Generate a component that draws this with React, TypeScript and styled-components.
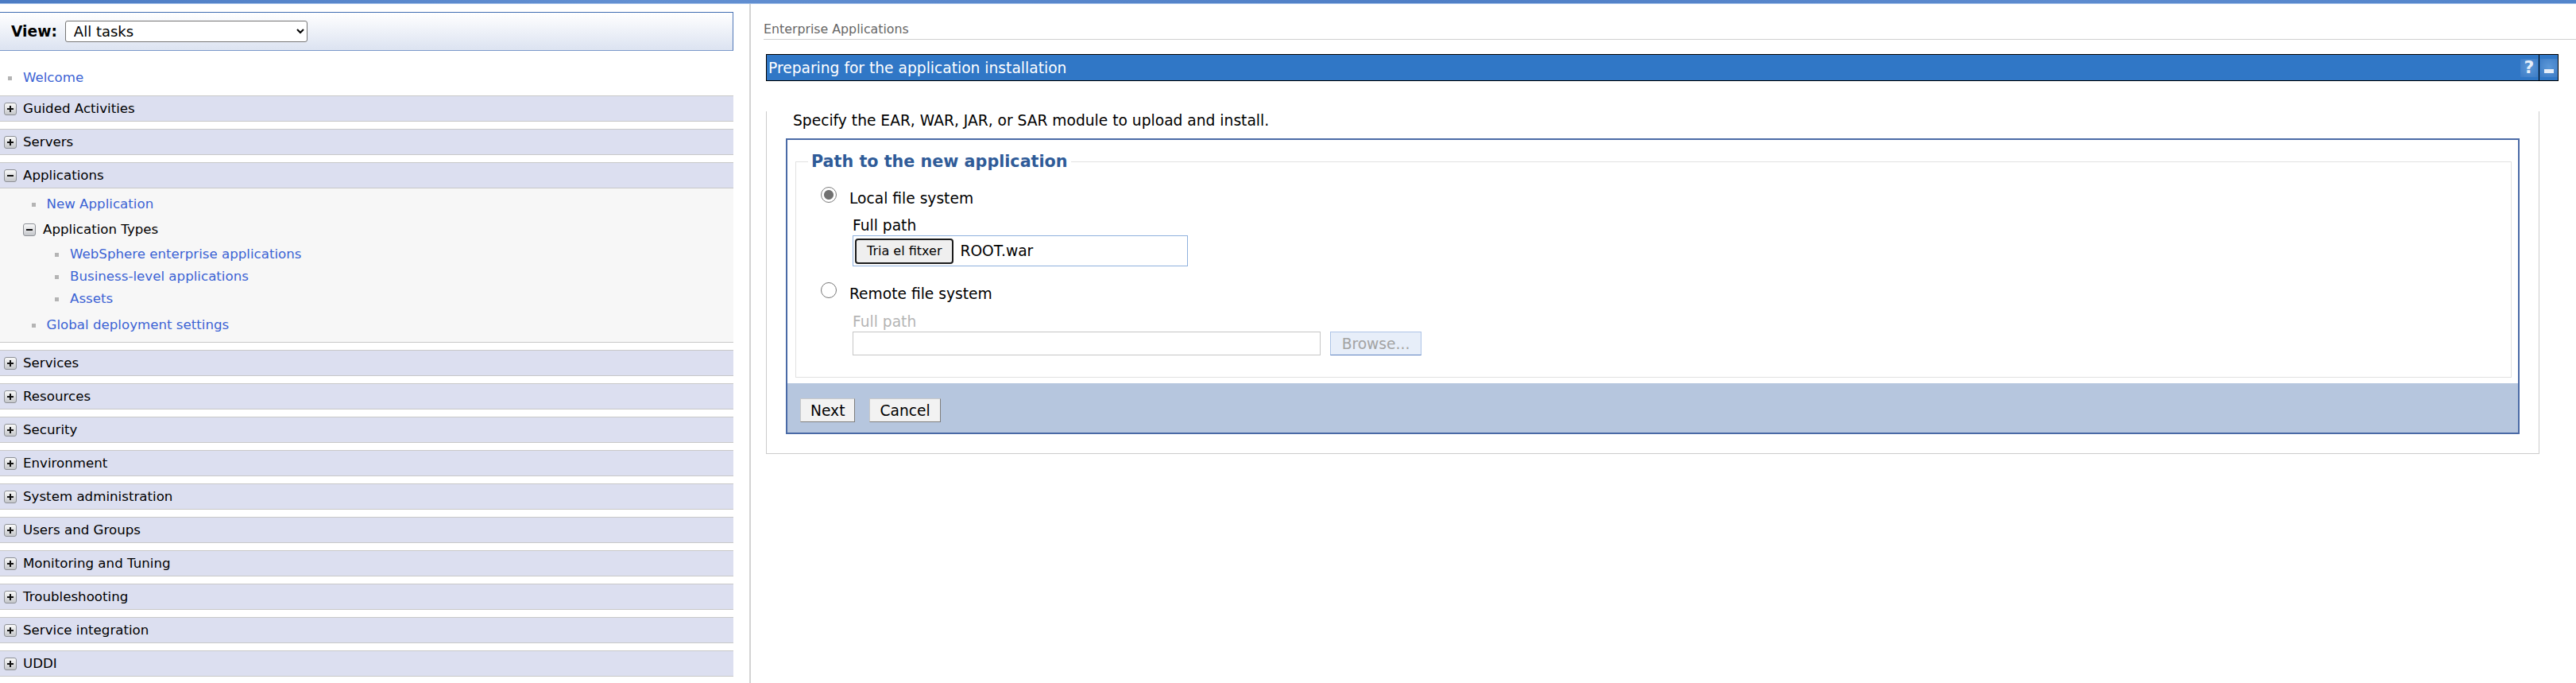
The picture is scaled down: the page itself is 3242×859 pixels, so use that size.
import React from 'react'
import styled, { createGlobalStyle } from 'styled-components'

const GlobalStyle = createGlobalStyle`
  *, *::before, *::after { box-sizing: border-box; }
  html, body { margin: 0; padding: 0; background: #fff; }
  body {
    font-family: "DejaVu Sans", Verdana, sans-serif;
    color: #000;
  }
`

type Category = { label: string; open?: boolean }

const categories: Category[] = [
  { label: 'Guided Activities' },
  { label: 'Servers' },
  { label: 'Applications', open: true },
  { label: 'Services' },
  { label: 'Resources' },
  { label: 'Security' },
  { label: 'Environment' },
  { label: 'System administration' },
  { label: 'Users and Groups' },
  { label: 'Monitoring and Tuning' },
  { label: 'Troubleshooting' },
  { label: 'Service integration' },
  { label: 'UDDI' },
]

const appTypes = ['WebSphere enterprise applications', 'Business-level applications', 'Assets']

function ToggleIcon({ open }: { open?: boolean }) {
  return (
    <svg width="16" height="16" viewBox="0 0 16 16" style={{ flex: 'none' }}>
      <defs>
        <linearGradient id="tgl" x1="0" y1="0" x2="0" y2="1">
          <stop offset="0" stopColor="#fbfbfb" />
          <stop offset="1" stopColor="#c3c5c9" />
        </linearGradient>
      </defs>
      <rect x="0.5" y="0.5" width="15" height="15" rx="2.5" fill="url(#tgl)" stroke="#8d9096" />
      <rect x="4" y="7" width="8" height="2" fill="#111" />
      {!open && <rect x="7" y="4" width="2" height="8" fill="#111" />}
    </svg>
  )
}

export default function App() {
  return (
    <>
      <GlobalStyle />
      <TopBar />
      <Main>
        <Sidebar>
          <ViewBar>
            <ViewLabel>View:</ViewLabel>
            <TaskSelect defaultValue="all">
              <option value="all">All tasks</option>
            </TaskSelect>
          </ViewBar>
          <Nav>
            <WelcomeLink href="#" $level={0}>Welcome</WelcomeLink>
            {categories.map((c) => (
              <div key={c.label}>
                <CategoryHeader>
                  <ToggleIcon open={c.open} />
                  {c.label}
                </CategoryHeader>
                {c.open && (
                  <CategoryBody>
                    <NavLink href="#" $level={1}>New Application</NavLink>
                    <GroupHeader>
                      <ToggleIcon open />
                      Application Types
                    </GroupHeader>
                    {appTypes.map((t, i) => (
                      <NavLink key={t} href="#" $level={2} $gap={i === 0 ? 3 : 0}>{t}</NavLink>
                    ))}
                    <NavLink href="#" $level={1} $gap={5}>Global deployment settings</NavLink>
                  </CategoryBody>
                )}
              </div>
            ))}
          </Nav>
        </Sidebar>

        <Content>
          <Breadcrumb>Enterprise Applications</Breadcrumb>
          <Portlet>
            <TitleRow>
              <TitleCell>
                Preparing for the application installation
                <HelpIcon>?</HelpIcon>
              </TitleCell>
              <MinCell>
                <MinIcon />
              </MinCell>
            </TitleRow>
            <PortletBody>
              <Intro>Specify the EAR, WAR, JAR, or SAR module to upload and install.</Intro>
              <FormBox>
                <Fieldset>
                  <Legend>Path to the new application</Legend>
                  <RadioRow $top={22}>
                    <Radio type="radio" name="src" defaultChecked />
                    Local file system
                  </RadioRow>
                  <FieldLabel $top={11}>Full path</FieldLabel>
                  <FileBox>
                    <FileButton type="button">Tria el fitxer</FileButton>
                    <FileName>ROOT.war</FileName>
                  </FileBox>
                  <RadioRow $top={23}>
                    <Radio type="radio" name="src" />
                    Remote file system
                  </RadioRow>
                  <FieldLabel $top={12} $disabled>Full path</FieldLabel>
                  <DisabledRow>
                    <PathInput disabled />
                    <BrowseButton type="button" disabled>Browse...</BrowseButton>
                  </DisabledRow>
                </Fieldset>
                <ButtonBar>
                  <ActionButton type="button">Next</ActionButton>
                  <ActionButton type="button">Cancel</ActionButton>
                </ButtonBar>
              </FormBox>
            </PortletBody>
          </Portlet>
        </Content>
      </Main>
    </>
  )
}

const TopBar = styled.div`
  height: 5px;
  background: linear-gradient(90deg, #4c7cc4 0%, #6390d2 25%, #4f7fc6 55%, #5d8bcf 80%, #5385cb 100%);
  border-bottom: 1px solid #9dbbe6;
`

const Main = styled.div`
  display: flex;
  min-height: calc(100vh - 5px);
`

const Sidebar = styled.aside`
  width: 923px;
  flex: none;
  margin-right: 20px;
`

const ViewBar = styled.div`
  margin-top: 10px;
  height: 49px;
  display: flex;
  align-items: center;
  gap: 10px;
  padding-left: 14px;
  background: linear-gradient(#ffffff, #dce3f1);
  border-top: 1px solid #3f6db1;
  border-bottom: 1px solid #7d9acb;
  border-right: 1px solid #5279b8;
`

const ViewLabel = styled.span`
  font-weight: bold;
  font-size: 18.67px;
`

const TaskSelect = styled.select`
  width: 305px;
  height: 27px;
  padding: 0 0 0 6px;
  font-family: inherit;
  font-size: 18px;
  color: #000;
  background: #fff;
  border: 1px solid #767676;
  border-radius: 3px;
`

const Nav = styled.nav`
  display: flex;
  flex-direction: column;
  gap: 9px;
  padding-top: 20px;
`

const NavLink = styled.a<{ $level: number; $gap?: number }>`
  display: flex;
  align-items: center;
  padding: 4px 0 4px ${(p) => 10 + p.$level * 29.5}px;
  margin-top: ${(p) => p.$gap ?? 0}px;
  line-height: 20px;
  font-size: 16.67px;
  color: #3b63d4;
  text-decoration: none;

  &::before {
    content: '';
    flex: none;
    width: 5px;
    height: 5px;
    margin-right: 14px;
    background: #b4b4b4;
  }
`

const WelcomeLink = styled(NavLink)`
  padding-bottom: 3px;
`

const CategoryHeader = styled.div`
  display: flex;
  align-items: center;
  gap: 8px;
  height: 33px;
  padding-left: 5px;
  background: #dcdff0;
  border-top: 1px solid #c8c8c8;
  border-bottom: 1px solid #c8c8c8;
  font-size: 16.67px;
  color: #000;
`

const CategoryBody = styled.div`
  padding: 6px 0 7px;
  background: #f7f7f7;
  border-bottom: 1px solid #c8c8c8;
`

const GroupHeader = styled.div`
  display: flex;
  align-items: center;
  gap: 9px;
  margin-top: 4px;
  padding: 4px 0 4px 29px;
  line-height: 20px;
  font-size: 16.67px;
  color: #000;
`

const Content = styled.main`
  flex: 1;
  min-width: 0;
  padding-left: 16px;
  border-left: 2px solid #d3d3d3;
`

const Breadcrumb = styled.div`
  margin-top: 22px;
  padding-bottom: 2px;
  line-height: 20px;
  font-size: 15.8px;
  color: #666;
  border-bottom: 1px solid #cfcfcf;
`

const Portlet = styled.section`
  margin: 18px 22px 0 3px;
`

const TitleRow = styled.div`
  display: flex;
  height: 34px;
`

const TitleCell = styled.div`
  flex: 1;
  display: flex;
  align-items: center;
  justify-content: space-between;
  padding: 0 1px 0 2px;
  background: #3077c6;
  border: 1px solid #000;
  color: #fff;
  font-size: 18.67px;
`

const HelpIcon = styled.span`
  width: 22px;
  height: 23px;
  display: flex;
  align-items: center;
  justify-content: center;
  background: radial-gradient(circle at 50% 45%, #5c98d8 0%, #4684cb 70%, #3c7cc6 100%);
  color: #e6eef9;
  font-weight: bold;
  font-size: 22px;
  line-height: 1;
`

const MinCell = styled.div`
  width: 24px;
  display: flex;
  align-items: center;
  padding-left: 1px;
  background: #3077c6;
  border: 1px solid #000;
  border-left: none;
`

const MinIcon = styled.span`
  width: 22px;
  height: 23px;
  display: flex;
  align-items: flex-end;
  justify-content: center;
  padding-bottom: 5px;
  background: radial-gradient(circle at 50% 45%, #5c98d8 0%, #4684cb 70%, #3c7cc6 100%);

  &::after {
    content: '';
    width: 12px;
    height: 5px;
    background: #e6eef9;
  }
`

const PortletBody = styled.div`
  margin-right: 24px;
  padding: 0 24px 24px;
  border: 1px solid #cccccc;
  border-top: none;
`

const Intro = styled.p`
  margin: 38px 0 11px 9px;
  line-height: 23px;
  font-size: 18.67px;
`

const FormBox = styled.div`
  border: 2px solid #4a6aa6;
`

const Fieldset = styled.fieldset`
  margin: 15px 8px 7px 10px;
  padding: 0 0 27px;
  min-width: 0;
  border: 1px solid #e2e2e2;
`

const Legend = styled.legend`
  margin-left: 15px;
  padding: 0 4px;
  line-height: 25px;
  font-size: 20.7px;
  font-weight: bold;
  color: #2f5b98;
`

const RadioRow = styled.label<{ $top: number }>`
  display: flex;
  align-items: flex-start;
  gap: 16px;
  margin-top: ${(p) => p.$top}px;
  padding-left: 31px;
  line-height: 23px;
  font-size: 18.67px;
`

const Radio = styled.input`
  appearance: none;
  flex: none;
  width: 20px;
  height: 20px;
  margin: -3px 0 0;
  border: 1px solid #767676;
  border-radius: 50%;
  background: #fff;

  &:checked {
    border-color: #7b7b7b;
    background: radial-gradient(circle, #717171 0 5.5px, #fff 6.5px);
  }
`

const FieldLabel = styled.div<{ $top: number; $disabled?: boolean }>`
  margin-top: ${(p) => p.$top}px;
  padding-left: 71px;
  line-height: 23px;
  font-size: 18.67px;
  color: ${(p) => (p.$disabled ? '#b5b5b5' : '#000')};
`

const FileBox = styled.div`
  display: flex;
  align-items: center;
  gap: 8px;
  width: 422px;
  height: 39px;
  margin: 1px 0 0 71px;
  padding: 0 2px;
  border: 1px solid #8fb1dd;
`

const FileButton = styled.button`
  height: 32px;
  padding: 0 13px;
  font-family: inherit;
  font-size: 16px;
  color: #000;
  background: #efefef;
  border: 2px solid #1b1b1b;
  border-radius: 4px;
`

const FileName = styled.span`
  font-size: 18.67px;
`

const DisabledRow = styled.div`
  display: flex;
  gap: 12px;
  margin: 1px 0 0 71px;
`

const PathInput = styled.input`
  width: 589px;
  height: 30px;
  background: #fff;
  border: 1px solid #c6c6c6;
`

const BrowseButton = styled.button`
  width: 115px;
  height: 30px;
  padding: 0;
  font-family: inherit;
  font-size: 18.67px;
  color: #a3a3a3;
  background: #e7eef9;
  border: 1px solid #aec4e6;
  border-bottom-color: #5f82c0;
`

const ButtonBar = styled.div`
  display: flex;
  gap: 18px;
  padding: 19px 16px 13px;
  background: #b6c6de;
`

const ActionButton = styled.button`
  height: 30px;
  padding: 0 12px;
  font-family: inherit;
  font-size: 18.67px;
  color: #000;
  background: #f2f2f2;
  border: 1px solid;
  border-color: #c9c9c9 #7d7d7d #7d7d7d #c9c9c9;
`
